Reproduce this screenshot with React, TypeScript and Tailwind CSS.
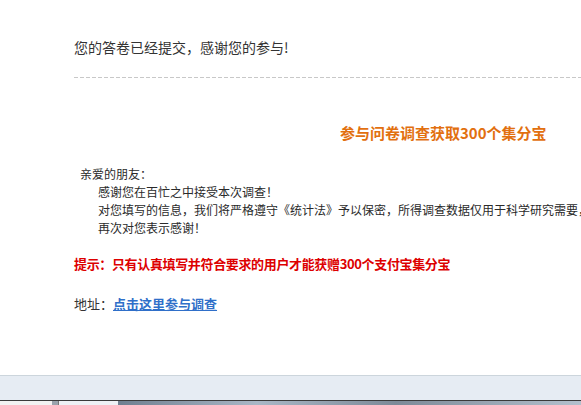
export default function App() {
  const font = "font-['SimSun','Noto_Sans_CJK_SC',sans-serif]";

  return (
    <div className={`w-[581px] h-[405px] bg-white overflow-hidden flex flex-col ${font}`}>
      {/* page body */}
      <div className="flex-1 flex flex-col pl-[74px] pt-[37px] min-h-0">
        <p className="text-[14px] leading-[20px] text-[#333] whitespace-nowrap">您的答卷已经提交，感谢您的参与!</p>
        <div className="mt-[20px] h-px bg-[repeating-linear-gradient(to_right,#c8c8c8_0_4px,transparent_4px_6px)]" />

        <h2 className="mt-[45px] ml-[266px] text-[15px] leading-[20px] font-bold text-[#e2700f] whitespace-nowrap">
          参与问卷调查获取300个集分宝
        </h2>

        <div className="mt-[22px] text-[12px] leading-[18px] text-[#2a2a2a] whitespace-nowrap">
          <p className="ml-[6px]">亲爱的朋友：</p>
          <div className="pl-[24px]">
            <p>感谢您在百忙之中接受本次调查！</p>
            <p>对您填写的信息，我们将严格遵守《统计法》予以保密，所得调查数据仅用于科学研究需要，绝不外泄。</p>
            <p>再次对您表示感谢！</p>
          </div>
        </div>

        <p className="mt-[18px] text-[13px] leading-[18px] font-bold tracking-[-0.35px] text-[#dd0000] whitespace-nowrap">
          提示：只有认真填写并符合要求的用户才能获赠300个支付宝集分宝
        </p>

        <p className="mt-[22px] text-[13px] leading-[18px] text-[#333] whitespace-nowrap">
          地址：
          <a href="#" className="font-bold text-[#2f6fc9] underline">点击这里参与调查</a>
        </p>
      </div>

      {/* status bar */}
      <div className="h-[25px] border-t border-[#ccd5dc] bg-[#e6ecf3]" />
      <div className="h-[5px] border-t border-[#3a3a3a] flex">
        <div className="w-[52px] bg-[#f2f2f2]" />
        <div className="w-[6px] bg-[#9aa3ad]" />
        <div className="w-[60px] bg-[#eef1f5] border-l border-[#777]" />
        <div className="flex-1 bg-[linear-gradient(to_right,#6f7f90,#a9b7c6_30%,#7d8a98_60%,#b3c0cd)]" />
      </div>
    </div>
  );
}
